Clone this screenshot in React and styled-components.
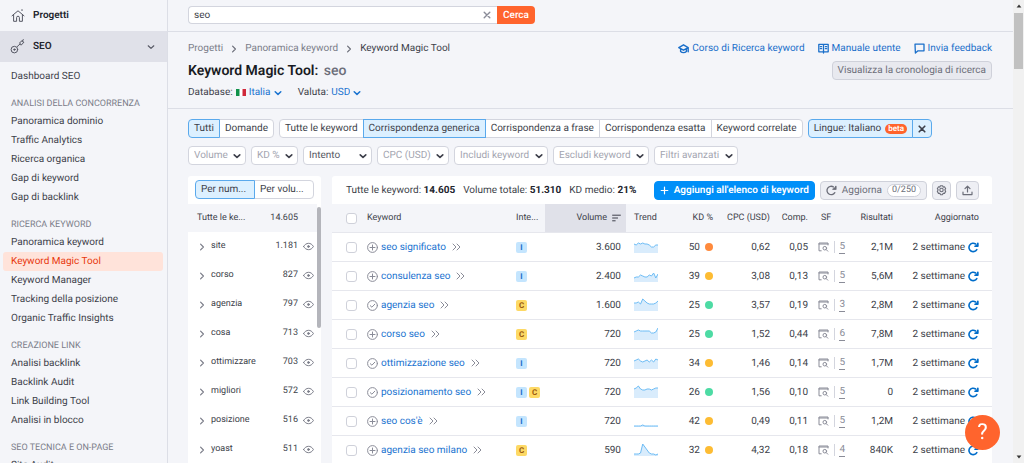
import React from 'react'
import styled, { createGlobalStyle, css } from 'styled-components'

const GlobalStyle = createGlobalStyle`
*, *::before, *::after {
  box-sizing: border-box;
}
body {
  margin: 0;
  overflow: hidden;
  background: #f4f5f9;
  color: #3d3f4a;
  font-family: Roboto, Inter, "Liberation Sans", sans-serif;
  font-size: 10px;
  line-height: 15px;
  text-rendering: geometricPrecision;
}
button, input, select {
  font: inherit;
  color: inherit;
  margin: 0;
  text-rendering: inherit;
}
a {
  color: inherit;
  text-decoration: none;
}
svg {
  display: block;
  flex: none;
}
`

/* ---------- page ---------- */

const Page = styled.div`
display: flex;
height: 100vh;
overflow: hidden;
`
const Main = styled.main`
flex: 1;
min-width: 0;
`
const PageScroll = styled.div`
width: 11px;
background: #f1f1f1;
display: flex;
flex-direction: column;
align-items: center;
padding: 4px 0;
`
const PageThumb = styled.div`
width: 9px;
height: 56px;
margin: 5px 0 auto;
background: #c1c1c1;
`

/* ---------- sidebar ---------- */

const Sidebar = styled.nav`
width: 168px;
flex: none;
border-right: 1px solid #dcdee6;
overflow: hidden;
`
const topItem = css`
display: flex;
align-items: center;
gap: 8px;
width: 100%;
height: 31px;
padding: 0 12px 0 10px;
font-weight: 600;
color: #23252e;

svg {
  color: #565864;
}
`
const HomeLink = styled.a`
${topItem}
`
const SectionToggle = styled.button`
${topItem}
border: none;
background: #e0e1e9;

svg:last-child {
  margin-left: auto;
}
`
const NavGroup = styled.div`
display: flex;
flex-direction: column;
padding: 0 4px 0 3px;
margin-top: ${props => props.$first ? '5px' : '10px'};
`
const NavTitle = styled.h2`
margin: 0;
padding-left: 8px;
font-size: 9px;
font-weight: 400;
line-height: 16px;
text-transform: uppercase;
color: #7b7d89;
`
const NavItem = styled.a`
padding-left: 8px;
line-height: 19px;
border-radius: 3px;
color: ${props => props.$active ? '#e8380d' : '#3d3f4a'};
background: ${props => props.$active ? '#ffe3da' : 'transparent'};
`

/* ---------- header ---------- */

const TopBar = styled.form`
display: flex;
height: 32px;
padding: 6px 20px 0;
border-bottom: 1px solid #dcdee6;
`
const SearchBox = styled.div`
display: flex;
align-items: center;
width: 309px;
height: 18px;
padding-right: 6px;
background: #fff;
border: 1px solid #d3d5de;
border-right: none;
border-radius: 4px 0 0 4px;
`
const SearchInput = styled.input`
flex: 1;
min-width: 0;
border: none;
outline: none;
background: none;
padding: 0 5px;
`
const ClearButton = styled.button`
border: none;
background: none;
padding: 0;
color: #8a8c98;
`
const SearchButton = styled.button`
height: 18px;
padding: 0 6px;
border: none;
border-radius: 0 4px 4px 0;
background: #ff642d;
color: #fff;
font-weight: 500;
`
const Header = styled.header`
display: flex;
justify-content: space-between;
padding: 8px 21px 8px 20px;
border-bottom: 1px solid #dcdee6;
`
const HeaderCol = styled.div`
display: flex;
flex-direction: column;
gap: 3px;
align-items: ${props => props.$end ? 'flex-end' : 'flex-start'};
`
const Crumbs = styled.div`
display: flex;
align-items: center;
gap: 7px;
line-height: 17px;
color: #6c6e79;
`
const Crumb = styled.a`
color: ${props => props.$current ? '#3d3f4a' : '#7b7d89'};
`
const Title = styled.h1`
margin: 0;
font-size: 14px;
font-weight: 600;
line-height: 22px;
color: #191b23;

span {
  margin-left: 2px;
  font-weight: 500;
  color: #6c6e79;
}
`
const Meta = styled.div`
display: flex;
gap: 16px;
`
const MetaItem = styled.label`
display: flex;
align-items: center;
gap: 3px;
`
const MetaSelect = styled.select`
appearance: none;
border: none;
background: none;
padding: 0;
color: #1a73d0;
`
const MetaArrow = styled.span`
color: #1a73d0;
`
const HeaderLinks = styled.div`
display: flex;
gap: 13px;
`
const HeaderLink = styled.a`
display: flex;
align-items: center;
gap: 3px;
line-height: 17px;
color: #1a6fca;
`
const HistoryButton = styled.button`
height: 19px;
margin-top: 1px;
padding: 0 5px;
border: 1px solid #cfd1da;
border-radius: 4px;
background: #e8e9ef;
color: #6c6e79;
`

/* ---------- filters ---------- */

const Content = styled.div`
padding: 10px 21px 0 20px;
`
const FilterRow = styled.div`
display: flex;
gap: 5px;
margin-bottom: 8px;
`
const Pills = styled.div`
display: flex;
`
const Pill = styled.button`
display: flex;
align-items: center;
justify-content: ${props => props.$wide ? 'flex-start' : 'center'};
gap: 4px;
flex: ${props => props.$wide ? '1' : 'none'};
height: 19px;
padding: 0 5px;
white-space: nowrap;
border: 1px solid ${props => props.$on ? '#5aa9ec' : '#d3d5de'};
background: ${props => props.$on ? '#dcf0ff' : '#fff'};
position: relative;
z-index: ${props => props.$on ? 1 : 0};

& + & {
  margin-left: -1px;
}
&:first-child {
  border-radius: 4px 0 0 4px;
}
&:last-child {
  border-radius: 0 4px 4px 0;
}
`
const Beta = styled.span`
padding: 0 3px;
border-radius: 5px;
background: #ff642d;
color: #fff;
font-size: 8px;
font-weight: 600;
line-height: 10px;
`
const Dropdown = styled.div`
display: flex;
position: relative;

svg {
  position: absolute;
  right: 5px;
  top: 6px;
  pointer-events: none;
}
`
const FilterSelect = styled.select`
appearance: none;
height: 19px;
padding: 0 ${props => props.$roomy ? '30px' : '17px'} 0 5px;
border: 1px solid #d3d5de;
border-radius: 4px;
background: #fff;
color: ${props => props.$roomy ? '#565864' : '#a3a5b0'};
`

/* ---------- panels ---------- */

const Panels = styled.div`
display: flex;
align-items: flex-start;
gap: 11px;
margin-top: 11px;
`
const Panel = styled.section`
background: #fff;
border-radius: 3px 3px 0 0;
flex: ${props => props.$side ? 'none' : '1'};
width: ${props => props.$side ? '133px' : 'auto'};
min-width: 0;
`
const SideHead = styled.div`
display: flex;
height: 28px;
padding: 4px 7px;
`
const Groups = styled.div`
display: flex;
`
const GroupList = styled.div`
flex: 1;
`
const GroupScroll = styled.div`
width: 4px;
height: 121px;
margin-top: 3px;
border-radius: 2px;
background: #b4b5bb;
`
const GroupTotal = styled.div`
display: flex;
justify-content: space-between;
height: 28px;
padding: 0 19px 0 9px;
align-items: center;
background: #f4f5f9;
font-size: 9px;
`
const GroupRow = styled.div`
display: flex;
align-items: center;
height: 29px;
padding: 0 3px 0 10px;
font-size: 9px;
color: #3d3f4a;

svg {
  color: #7b7d89;
}
span {
  margin-left: 5px;
}
b {
  margin: 0 5px 0 auto;
  font-weight: 400;
}
`
const TableHead = styled.div`
display: flex;
align-items: center;
justify-content: space-between;
height: 28px;
padding: 0 13px 0 14px;
`
const Totals = styled.div`
display: flex;
gap: 8px;
white-space: nowrap;

strong {
  font-weight: 700;
  color: #23252e;
}
`
const Actions = styled.div`
display: flex;
gap: 5px;
`
const ActionButton = styled.button`
display: flex;
align-items: center;
gap: 5px;
height: 19px;
padding: 0 ${props => props.$tight ? '3px' : '5px'};
white-space: nowrap;
border: 1px solid #cfd1da;
border-radius: 4px;
background: #eeeff4;
color: #6c6e79;
`
const PrimaryButton = styled(ActionButton)`
border-color: #008ff8;
background: #008ff8;
color: #fff;
font-weight: 600;
`
const Count = styled.span`
padding: 0 4px;
border: 1px solid #cfd1da;
border-radius: 7px;
background: #fff;
font-size: 9px;
line-height: 11px;
`

/* ---------- table ---------- */

const Table = styled.table`
width: 100%;
table-layout: fixed;
border-collapse: separate;
border-spacing: 0;
`
const Th = styled.th`
width: ${props => props.$w};
height: 29px;
padding: ${props => props.$pad || '0 5px'};
text-align: ${props => props.$right ? 'right' : 'left'};
font-size: 9px;
font-weight: 400;
white-space: nowrap;
background: ${props => props.$sorted ? '#e0e1e9' : '#f4f5f9'};
border-bottom: 1px solid #e6e7ed;
`
const Td = styled.td`
height: 29px;
padding: ${props => props.$pad || '0 5px'};
text-align: ${props => props.$right ? 'right' : 'left'};
white-space: nowrap;
border-bottom: 1px solid #e6e7ed;
`
const Line = styled.div`
display: flex;
align-items: center;
gap: ${props => props.$gap || '5px'};
justify-content: ${props => props.$end ? 'flex-end' : 'flex-start'};
color: ${props => props.$muted ? '#8a8c98' : 'inherit'};
`
const Check = styled.input`
appearance: none;
display: block;
width: 11px;
height: 11px;
margin: 0;
border: 1px solid #cfd1da;
border-radius: 3px;
background: #fff;
`
const KeywordLink = styled.a`
color: #1a73d0;
margin-right: 3px;
`
const Intent = styled.span`
width: 11px;
border-radius: 2px;
text-align: center;
font-size: 8px;
font-weight: 700;
line-height: 11px;
color: ${props => props.$kind === 'I' ? '#1a6fca' : '#99580f'};
background: ${props => props.$kind === 'I' ? '#c4e5fe' : '#fdd965'};
`
const Dot = styled.i`
width: 8px;
height: 8px;
border-radius: 50%;
background: ${props => props.$color};
`
const SerpCount = styled.span`
line-height: 12px;
border-bottom: 1px dashed #8a8c98;
`
const Divider = styled.i`
width: 1px;
height: 12px;
background: #d3d5de;
`
const RefreshButton = styled.button`
border: none;
background: none;
padding: 0;
color: #006dca;
`
const HelpButton = styled.button`
position: fixed;
right: 24px;
bottom: 13px;
width: 35px;
height: 35px;
display: flex;
align-items: center;
justify-content: center;
border: none;
border-radius: 50%;
background: #ff642d;
color: #fff;
font-size: 22px;
`

/* ---------- icons ---------- */

const Svg = ({ w = 12, h = w, box = `0 0 ${w} ${h}`, stroke = 1, children }) => (
  <svg width={w} height={h} viewBox={box} fill="none" stroke="currentColor" strokeWidth={stroke} strokeLinecap="round" strokeLinejoin="round" aria-hidden="true">
    {children}
  </svg>
)
const Home = () => (
  <Svg w={15} h={15}>
    <path d="M2 7.8L8 2.8l6 5M3.6 7v6.3h3V9.6a1.4 1.4 0 0 1 2.8 0v3.7h3V7M12 1.6v1" />
  </Svg>
)
const SeoIcon = () => (
  <Svg w={15} h={15}>
    <circle cx="4.4" cy="10.6" r="3.3" />
    <circle cx="4.4" cy="10.6" r=".7" fill="currentColor" />
    <path d="M7.2 7.6l3-2.8M10.2 4.8L9.4 4l2.8-2.4.4 1.2 1.4.3-2.6 2.8zM12.4 1.4l1.2-.6" />
  </Svg>
)
const Down = ({ stroke = 1.5 }) => (
  <Svg w={8} stroke={stroke}><path d="M1.2 2.8L4 5.4l2.8-2.6" /></Svg>
)
const Right = () => (
  <Svg w={8} stroke={1.2}><path d="M2.6 1.2L5.4 4 2.6 6.8" /></Svg>
)
const Chevrons = () => (
  <Svg w={9} h={8}><path d="M1 1l3 3-3 3M5 1l3 3-3 3" /></Svg>
)
const Cross = ({ stroke = 1.4 }) => (
  <Svg w={8} stroke={stroke}><path d="M1.2 1.2l5.6 5.6M6.8 1.2L1.2 6.8" /></Svg>
)
const Cap = () => (
  <Svg w={11} stroke={1.4}><path d="M.8 4.6l4.7-2.8 4.7 2.8-4.7 2.6zM2.6 6v2.4c1.6 1.6 4.2 1.6 5.8 0V6M10.2 4.8v4" /></Svg>
)
const Book = () => (
  <Svg w={11} stroke={1.3}><path d="M.8 1.4h9.4v7.4H.8zM5.5 1.4v8.6M2.4 3.6h1.2M2.4 5.6h1.2M7.4 3.6h1.2M7.4 5.6h1.2" /></Svg>
)
const Bubble = () => (
  <Svg w={11} stroke={1.3}><path d="M1 1.2h9v6.6H4L1.4 10z" /></Svg>
)
const Eye = () => (
  <Svg w={11} h={9}>
    <path d="M.6 4.5C3 .2 8 .2 10.4 4.5 8 8.8 3 8.8 .6 4.5z" />
    <circle cx="5.5" cy="4.5" r=".9" fill="currentColor" />
  </Svg>
)
const Sort = () => (
  <Svg w={9} h={8}><path d="M.6 1.2h7.8M.6 4h5M.6 6.8h2.6" /></Svg>
)
const Plus = () => (
  <Svg w={9} stroke={1.2}><path d="M4.5 1.2v6.6M1.2 4.5h6.6" /></Svg>
)
const Refresh = ({ stroke = 1.3 }) => (
  <Svg w={11} stroke={stroke}>
    <path d="M8.8 7.6A4.2 4.2 0 1 1 7.6 2" />
    <path d="M6.4 4.6h3.8V.8z" fill="currentColor" stroke="none" />
    <path d="M7 4.2h2.8V1.4" />
  </Svg>
)
const Gear = () => (
  <Svg w={11} stroke={1.1}>
    <path d="M4.4.8h2.2l.5 1.3 1.4-.3 1.2 1.9-.9 1.1.9 1.6-1.2 2-1.4-.2-.5 1.5H4.4l-.5-1.5-1.4.2-1.2-2 .9-1.6-.9-1.1 1.2-1.9 1.4.3z" />
    <circle cx="5.5" cy="5" r="1.7" />
  </Svg>
)
const Upload = () => (
  <Svg w={11} stroke={1.2}><path d="M5.5 7V1.4M3 3.6l2.5-2.4L8 3.6M1 7v2.6h9V7" /></Svg>
)
const Saved = ({ done }) => (
  <Svg w={11}>
    <circle cx="5.5" cy="5.5" r="4.9" />
    <path d={done ? 'M3.3 5.7l1.6 1.5 2.9-3' : 'M5.5 3v5M3 5.5h5'} />
  </Svg>
)
const Serp = () => (
  <Svg w={11} h={10}>
    <path d="M3.2 8.8H1V1h9v2M1 2h9" />
    <circle cx="6.8" cy="6.2" r="1.8" />
    <path d="M8.2 7.6l1.6 1.6" />
  </Svg>
)
const Flag = () => (
  <svg width="10" height="7" viewBox="0 0 10 7" aria-hidden="true">
    <path fill="#fff" d="M0 0h10v7H0z" />
    <path fill="#11924b" d="M0 0h3.5v7H0z" />
    <path fill="#d0283a" d="M6.5 0H10v7H6.5z" />
  </svg>
)
const Arrow = ({ down }) => (
  <svg width="6" height="4" viewBox="0 0 6 4" aria-hidden="true">
    <path fill="#333" d={down ? 'M.6 .6h4.8L3 3.4z' : 'M.6 3.4h4.8L3 .6z'} />
  </svg>
)

const Trend = ({ points }) => {
  const step = 24 / (points.length - 1)
  const line = points.map((p, i) => `${i * step},${13 - p}`).join(' ')
  return (
    <svg width="24" height="14" viewBox="0 0 24 14" aria-hidden="true">
      <polygon points={`0,13 ${line} 24,13`} fill="#d9ecfc" />
      <polyline points={line} fill="none" stroke="#6cbcf5" strokeWidth="1" />
    </svg>
  )
}

/* ---------- data ---------- */

const nav = [
  { items: ['Dashboard SEO'] },
  { title: 'Analisi della concorrenza', items: ['Panoramica dominio', 'Traffic Analytics', 'Ricerca organica', 'Gap di keyword', 'Gap di backlink'] },
  { title: 'Ricerca keyword', items: ['Panoramica keyword', 'Keyword Magic Tool', 'Keyword Manager', 'Tracking della posizione', 'Organic Traffic Insights'] },
  { title: 'Creazione link', items: ['Analisi backlink', 'Backlink Audit', 'Link Building Tool', 'Analisi in blocco'] },
  { title: 'SEO tecnica e on-page', items: ['Site Audit'] },
]

const matches = ['Tutte le keyword', 'Corrispondenza generica', 'Corrispondenza a frase', 'Corrispondenza esatta', 'Keyword correlate']

const filters = ['Volume', 'KD %', 'Intento', 'CPC (USD)', 'Includi keyword', 'Escludi keyword', 'Filtri avanzati']

const groups = [
  ['site', '1.181'],
  ['corso', '827'],
  ['agenzia', '797'],
  ['cosa', '713'],
  ['ottimizzare', '703'],
  ['migliori', '572'],
  ['posizione', '516'],
  ['yoast', '511'],
]

const orange = '#ff8a3c'
const yellow = '#fdbc33'
const green = '#4ddba4'

const rows = [
  { kw: 'seo significato', intent: 'I', vol: '3.600', trend: [9, 8, 10, 9, 10, 9, 9, 8, 6, 6, 8, 8], kd: 50, color: orange, cpc: '0,62', comp: '0,05', sf: 5, res: '2,1M' },
  { kw: 'consulenza seo', intent: 'I', vol: '2.400', trend: [4, 5, 5, 7, 6, 5, 5, 7, 6, 9, 4, 8], kd: 39, color: yellow, cpc: '3,08', comp: '0,13', sf: 5, res: '5,6M' },
  { kw: 'agenzia seo', saved: true, intent: 'C', vol: '1.600', trend: [8, 8, 9, 7, 12, 10, 8, 7, 7, 7, 8, 10], kd: 25, color: green, cpc: '3,57', comp: '0,19', sf: 3, res: '2,8M' },
  { kw: 'corso seo', intent: 'C', vol: '720', trend: [8, 9, 10, 9, 9, 9, 9, 9, 7, 7, 8, 12], kd: 25, color: green, cpc: '1,52', comp: '0,44', sf: 6, res: '7,8M' },
  { kw: 'ottimizzazione seo', saved: true, intent: 'I', vol: '720', trend: [8, 9, 10, 8, 7, 8, 9, 7, 9, 7, 10, 9], kd: 34, color: yellow, cpc: '1,46', comp: '0,14', sf: 5, res: '1,7M' },
  { kw: 'posizionamento seo', saved: true, intent: 'IC', vol: '720', trend: [9, 10, 12, 9, 8, 8, 9, 9, 8, 9, 10, 10], kd: 26, color: green, cpc: '1,56', comp: '0,10', sf: 5, res: '0' },
  { kw: "seo cos'è", intent: 'I', vol: '720', trend: [1, 1, 1, 1, 2, 1, 1, 1, 1, 1, 1, 1], kd: 42, color: yellow, cpc: '0,49', comp: '0,11', sf: 5, res: '1,2M' },
  { kw: 'agenzia seo milano', intent: 'C', vol: '590', trend: [2, 2, 2, 3, 12, 9, 6, 3, 2, 2, 1, 2], kd: 32, color: yellow, cpc: '4,32', comp: '0,18', sf: 4, res: '840K' },
]

const KeywordRow = ({ row }) => (
  <tr>
    <Td $pad="0 0 0 14px"><Check type="checkbox" aria-label={row.kw} /></Td>
    <Td>
      <Line $gap="3px" $muted>
        <Saved done={row.saved} />
        <KeywordLink href="#">{row.kw}</KeywordLink>
        <Chevrons />
      </Line>
    </Td>
    <Td>
      <Line $gap="2px">
        {row.intent.split('').map(k => <Intent key={k} $kind={k}>{k}</Intent>)}
      </Line>
    </Td>
    <Td $right>{row.vol}</Td>
    <Td $pad="0 0 0 8px"><Trend points={row.trend} /></Td>
    <Td><Line $end>{row.kd}<Dot $color={row.color} /></Line></Td>
    <Td $right>{row.cpc}</Td>
    <Td $right>{row.comp}</Td>
    <Td>
      <Line $muted>
        <Serp />
        <Divider />
        <SerpCount>{row.sf}</SerpCount>
      </Line>
    </Td>
    <Td $right>{row.res}</Td>
    <Td $pad="0 13px 0 0">
      <Line $end $gap="3px">
        2 settimane
        <RefreshButton aria-label={`Aggiorna ${row.kw}`}><Refresh stroke={1.6} /></RefreshButton>
      </Line>
    </Td>
  </tr>
)

const App = () => {
  return (
    <Page>
      <GlobalStyle />
      <Sidebar>
        <HomeLink href="#"><Home />Progetti</HomeLink>
        <SectionToggle aria-expanded="true"><SeoIcon />SEO<Down stroke={1.2} /></SectionToggle>
        {nav.map((group, i) => (
          <NavGroup key={i} $first={i === 0}>
            {group.title && <NavTitle>{group.title}</NavTitle>}
            {group.items.map(item => (
              <NavItem key={item} href="#" $active={item === 'Keyword Magic Tool'}>{item}</NavItem>
            ))}
          </NavGroup>
        ))}
      </Sidebar>

      <Main>
        <TopBar onSubmit={e => e.preventDefault()}>
          <SearchBox>
            <SearchInput aria-label="Cerca" defaultValue="seo" />
            <ClearButton type="button" aria-label="Cancella"><Cross /></ClearButton>
          </SearchBox>
          <SearchButton>Cerca</SearchButton>
        </TopBar>

        <Header>
          <HeaderCol>
            <Crumbs>
              <Crumb href="#">Progetti</Crumb>
              <Right />
              <Crumb href="#">Panoramica keyword</Crumb>
              <Right />
              <Crumb href="#" $current>Keyword Magic Tool</Crumb>
            </Crumbs>
            <Title>Keyword Magic Tool: <span>seo</span></Title>
            <Meta>
              <MetaItem>
                Database:
                <Flag />
                <MetaSelect><option>Italia</option></MetaSelect>
                <MetaArrow><Down /></MetaArrow>
              </MetaItem>
              <MetaItem>
                Valuta:
                <MetaSelect><option>USD</option></MetaSelect>
                <MetaArrow><Down /></MetaArrow>
              </MetaItem>
            </Meta>
          </HeaderCol>
          <HeaderCol $end>
            <HeaderLinks>
              <HeaderLink href="#"><Cap />Corso di Ricerca keyword</HeaderLink>
              <HeaderLink href="#"><Book />Manuale utente</HeaderLink>
              <HeaderLink href="#"><Bubble />Invia feedback</HeaderLink>
            </HeaderLinks>
            <HistoryButton>Visualizza la cronologia di ricerca</HistoryButton>
          </HeaderCol>
        </Header>

        <Content>
          <FilterRow>
            <Pills>
              <Pill $on>Tutti</Pill>
              <Pill>Domande</Pill>
            </Pills>
            <Pills>
              {matches.map((m, i) => <Pill key={m} $on={i === 1}>{m}</Pill>)}
            </Pills>
            <Pills>
              <Pill $on>Lingue: Italiano <Beta>beta</Beta></Pill>
              <Pill $on aria-label="Rimuovi"><Cross stroke={1.6} /></Pill>
            </Pills>
          </FilterRow>
          <FilterRow>
            {filters.map(f => (
              <Dropdown key={f}>
                <FilterSelect aria-label={f} $roomy={f === 'Intento'}><option>{f}</option></FilterSelect>
                <Down stroke={1.6} />
              </Dropdown>
            ))}
          </FilterRow>

          <Panels>
            <Panel $side>
              <SideHead>
                <Pill $on $wide>Per num...</Pill>
                <Pill $wide>Per volu...</Pill>
              </SideHead>
              <Groups>
                <GroupList>
                  <GroupTotal><span>Tutte le ke...</span><span>14.605</span></GroupTotal>
                  {groups.map(([name, count]) => (
                    <GroupRow key={name}><Right /><span>{name}</span><b>{count}</b><Eye /></GroupRow>
                  ))}
                </GroupList>
                <GroupScroll />
              </Groups>
            </Panel>

            <Panel>
              <TableHead>
                <Totals>
                  <span>Tutte le keyword: <strong>14.605</strong></span>
                  <span>Volume totale: <strong>51.310</strong></span>
                  <span>KD medio: <strong>21%</strong></span>
                </Totals>
                <Actions>
                  <PrimaryButton><Plus />Aggiungi all'elenco di keyword</PrimaryButton>
                  <ActionButton><Refresh />Aggiorna<Count>0/250</Count></ActionButton>
                  <ActionButton $tight aria-label="Impostazioni"><Gear /></ActionButton>
                  <ActionButton aria-label="Esporta"><Upload /></ActionButton>
                </Actions>
              </TableHead>
              <Table>
                <thead>
                  <tr>
                    <Th $w="30px" $pad="0 0 0 14px"><Check type="checkbox" aria-label="Seleziona tutto" /></Th>
                    <Th>Keyword</Th>
                    <Th $w="34px">Inte...</Th>
                    <Th $w="81px" $right $sorted><Line $end>Volume<Sort /></Line></Th>
                    <Th $w="38px" $pad="0 0 0 8px">Trend</Th>
                    <Th $w="54px" $right>KD %</Th>
                    <Th $w="57px" $right>CPC (USD)</Th>
                    <Th $w="38px" $right>Comp.</Th>
                    <Th $w="37px" $pad="0 8px">SF</Th>
                    <Th $w="48px" $right>Risultati</Th>
                    <Th $w="94px" $right $pad="0 13px 0 0">Aggiornato</Th>
                  </tr>
                </thead>
                <tbody>
                  {rows.map(row => <KeywordRow key={row.kw} row={row} />)}
                </tbody>
              </Table>
            </Panel>
          </Panels>
        </Content>
      </Main>

      <PageScroll>
        <Arrow />
        <PageThumb />
        <Arrow down />
      </PageScroll>
      <HelpButton aria-label="Aiuto">?</HelpButton>
    </Page>
  )
}

export default App
